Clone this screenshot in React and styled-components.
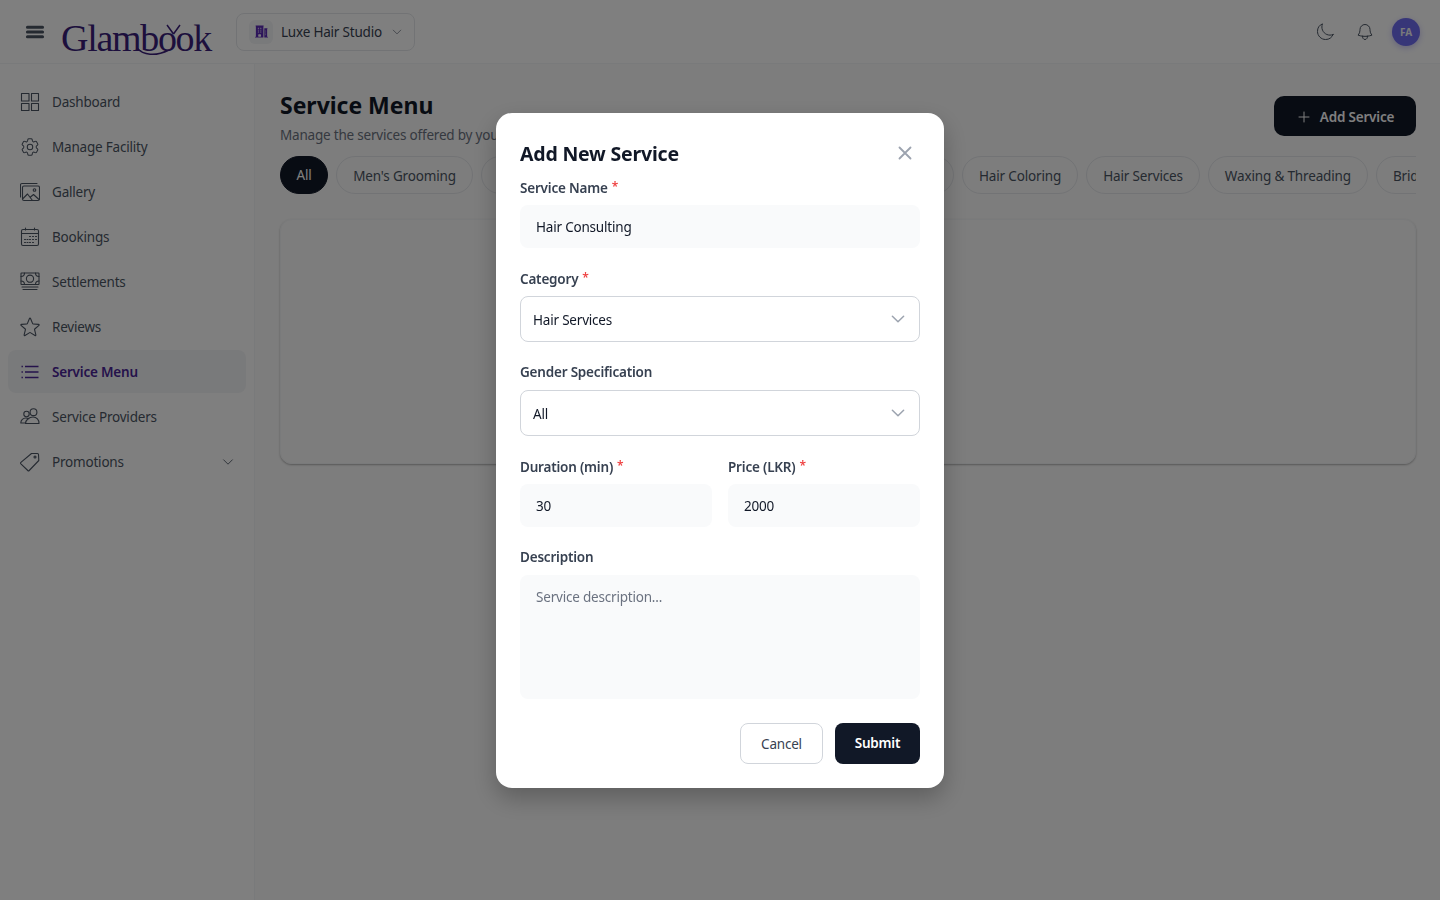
import styled, { createGlobalStyle } from "styled-components";
import {
  HiOutlineCog6Tooth,
  HiOutlineStar,
  HiOutlineChevronDown,
  HiOutlineMoon,
  HiOutlineBell,
  HiOutlinePlus,
  HiOutlineXMark,
  HiBars3,
  HiBuildingOffice2,
} from "react-icons/hi2";

const GlobalStyle = createGlobalStyle`
  * { box-sizing: border-box; }
  html, body { margin: 0; height: 100%; }
  body {
    font-family: "Noto Sans", "Open Sans", sans-serif;
    font-size: 13.5px;
    letter-spacing: -0.2px;
    background: #fff;
    color: #111827;
    overflow: hidden;
  }
  input, textarea, button {
    font-family: inherit;
    font-size: inherit;
    letter-spacing: inherit;
  }
`;

const Page = styled.div`
  height: 900px;
  display: flex;
  flex-direction: column;
`;

const Header = styled.header`
  height: 64px;
  flex: none;
  display: flex;
  align-items: center;
  padding: 0 20px 0 24px;
  border-bottom: 1px solid #f3f4f6;
`;

const MenuButton = styled.span`
  display: flex;
  font-size: 22px;
  color: #4b5563;
  margin-right: 15px;
  svg { stroke-width: 1.8; }
`;

const Logo = styled.div`
  position: relative;
  width: 150px;
  flex: none;
  margin: 13px 25px 0 0;
  font-family: "Liberation Serif", serif;
  font-size: 38px;
  letter-spacing: -1.3px;
  line-height: 38px;
  color: #3b1f7a;
`;

const LogoMark = styled.svg`
  position: absolute;
  left: 70px;
  top: 3px;
`;

const FacilityPicker = styled.div`
  height: 38px;
  width: 179px;
  flex: none;
  display: flex;
  align-items: center;
  padding: 0 12px;
  gap: 8px;
  border: 1px solid #e5e7eb;
  border-radius: 8px;
  color: #374151;
  white-space: nowrap;
`;

const FacilityIcon = styled.span`
  width: 24px;
  height: 24px;
  flex: none;
  display: flex;
  align-items: center;
  justify-content: center;
  border-radius: 6px;
  background: #f3f4f6;
  color: #5b2bb5;
  font-size: 15px;
`;

const Caret = styled.span`
  display: flex;
  font-size: 12px;
  color: #6b7280;
  margin-left: 1px;
`;

const HeaderRight = styled.div`
  margin-left: auto;
  display: flex;
  align-items: center;
  gap: 20px;
`;

const RoundIcon = styled.span`
  display: flex;
  width: 20px;
  font-size: 20px;
  color: #4b5563;
  svg { stroke-width: 1.2; }
`;

const Avatar = styled.span`
  width: 28px;
  height: 28px;
  margin-left: -3px;
  border-radius: 50%;
  display: flex;
  align-items: center;
  justify-content: center;
  background: #6f6cf0;
  color: #f3f4f6;
  font-size: 10px;
  font-weight: 700;
  letter-spacing: 0;
  box-shadow: 0 2px 6px rgba(79, 70, 229, 0.3);
`;

const Body = styled.div`
  flex: 1;
  display: flex;
  min-height: 0;
`;

const Sidebar = styled.nav`
  width: 255px;
  flex: none;
  padding: 16px 8px 0;
  border-right: 1px solid #f3f4f6;
  display: flex;
  flex-direction: column;
  gap: 2px;
`;

const NavItem = styled.div`
  height: 43px;
  display: flex;
  align-items: center;
  gap: 12px;
  padding: 0 12px;
  border-radius: 8px;
  font-weight: ${({ $active }) => ($active ? 600 : 400)};
  color: ${({ $active }) => ($active ? "#4a2596" : "#4b5563")};
  background: ${({ $active }) => ($active ? "#f3f4f6" : "transparent")};
`;

const NavIcon = styled.span`
  width: 20px;
  display: flex;
  justify-content: center;
  font-size: 22px;
  svg { flex: none; stroke-width: ${({ $active }) => ($active ? 1.7 : 1.1)}; }
`;

const NavCaret = styled.span`
  display: flex;
  margin: 0 -1px 0 auto;
  font-size: 14px;
`;

const Main = styled.main`
  flex: 1;
  min-width: 0;
  padding: 26px 24px 0 25px;
  background: #fafafa;
`;

const TitleRow = styled.div`
  display: flex;
  justify-content: space-between;
  align-items: flex-start;
`;

const PageTitle = styled.h1`
  margin: 0;
  font-size: 23px;
  line-height: 31px;
  font-weight: 700;
  letter-spacing: -0.02px;
  color: #111827;
`;

const PageSub = styled.p`
  margin: 4px 0 0;
  line-height: 20px;
  color: #6b7280;
`;

const AddButton = styled.button`
  margin-top: 6px;
  height: 40px;
  width: 142px;
  padding: 2px 0 0;
  display: flex;
  align-items: center;
  justify-content: center;
  gap: 8px;
  border: 0;
  border-radius: 10px;
  background: #111827;
  color: #fff;
  font-weight: 600;
`;

const Tabs = styled.div`
  margin-top: 11px;
  display: flex;
  gap: 8px;
  overflow: hidden;
`;

const Tab = styled.span`
  height: 38px;
  flex: none;
  display: flex;
  align-items: center;
  padding: ${({ $active }) => ($active ? "0 15.5px" : "2px 16px 0")};
  border-radius: 19px;
  border: 1px solid ${({ $active }) => ($active ? "#111827" : "#e5e7eb")};
  background: ${({ $active }) => ($active ? "#111827" : "transparent")};
  color: ${({ $active }) => ($active ? "#fff" : "#4b5563")};
  letter-spacing: -0.15px;
`;

const EmptyCard = styled.section`
  margin-top: 25px;
  height: 245px;
  border: 1px solid #f3f4f6;
  border-radius: 12px;
  box-shadow: 0 1px 2px rgba(0, 0, 0, 0.3);
`;

const Backdrop = styled.div`
  position: fixed;
  inset: 0;
  display: flex;
  align-items: center;
  justify-content: center;
  background: rgba(0, 0, 0, 0.5);
`;

const Modal = styled.form`
  width: 448px;
  height: 675px;
  padding: 24px;
  background: #fff;
  border-radius: 16px;
  box-shadow: 0 10px 25px rgba(0, 0, 0, 0.25);
`;

const ModalHead = styled.div`
  display: flex;
  justify-content: space-between;
  align-items: flex-start;
  height: 41px;
`;

const ModalTitle = styled.h2`
  margin: 3px 0 0;
  font-size: 19.5px;
  line-height: 28px;
  font-weight: 700;
  color: #111827;
`;

const CloseButton = styled.span`
  display: flex;
  margin: 5px 4px 0 0;
  font-size: 22px;
  color: #9ca3af;
  svg { stroke-width: 2; }
`;

const Field = styled.div`
  margin-top: ${({ $gap }) => $gap || 0}px;
  min-width: 0;
`;

const Label = styled.label`
  display: block;
  height: 20px;
  line-height: 18px;
  margin-bottom: 7px;
  font-weight: 600;
  color: #374151;
`;

const Required = styled.span`
  color: #ef4444;
  margin-left: 4px;
  vertical-align: 2px;
  font-size: 12px;
`;

const TextInput = styled.input`
  display: block;
  width: 100%;
  height: 43px;
  padding: 2px 16px 0;
  border: 0;
  border-radius: 8px;
  background: #f9fafb;
  color: #111827;
  outline: none;
`;

const TextArea = styled.textarea`
  display: block;
  width: 100%;
  height: 124px;
  padding: 13px 16px;
  border: 0;
  border-radius: 8px;
  background: #f9fafb;
  resize: none;
  outline: none;
  &::placeholder { color: #6b7280; opacity: 1; }
`;

const Select = styled.div`
  height: 46px;
  display: flex;
  align-items: center;
  justify-content: space-between;
  padding: 2px 12px 0 12px;
  border: 1px solid #d1d5db;
  border-radius: 8px;
  color: #111827;
`;

const SelectCaret = styled.span`
  display: flex;
  margin-top: -2px;
  font-size: 18px;
  color: #9ca3af;
  svg { stroke-width: 2; }
`;

const TwoColumns = styled.div`
  margin-top: 21px;
  display: grid;
  grid-template-columns: 1fr 1fr;
  gap: 16px;
`;

const Actions = styled.div`
  margin-top: 24px;
  display: flex;
  justify-content: flex-end;
  gap: 12px;
`;

const CancelButton = styled.button`
  width: 83px;
  height: 41px;
  padding: 2px 0 0;
  border: 1px solid #d1d5db;
  border-radius: 8px;
  background: #fff;
  color: #374151;
`;

const SubmitButton = styled.button`
  width: 85px;
  height: 41px;
  border: 0;
  border-radius: 8px;
  background: #111827;
  color: #fff;
  font-weight: 600;
`;

const LineIcon = ({ children }) => (
  <svg width="20" height="20" viewBox="0 0 20 20" fill="none" stroke="currentColor" strokeLinejoin="round" strokeLinecap="round">
    {children}
  </svg>
);

const DashboardIcon = () => (
  <LineIcon>
    <rect x="1.5" y="1.5" width="7.5" height="7.5" />
    <rect x="11.5" y="1.5" width="7" height="7.5" />
    <rect x="1.5" y="11.5" width="7.5" height="7" />
    <rect x="11.5" y="11.5" width="7" height="7" />
  </LineIcon>
);

const GalleryIcon = () => (
  <LineIcon>
    <path d="M0.5 15V3A1.5 1.5 0 0 1 2 1.5H17" />
    <rect x="2.5" y="4" width="17" height="14.5" rx="1.5" />
    <path d="M3 16.5l4.5-4.5 5 6.5M10.5 15l3-2.5 5.5 5" />
    <circle cx="14.5" cy="8" r="1.3" />
  </LineIcon>
);

const BookingsIcon = () => (
  <LineIcon>
    <rect x="1.5" y="2.5" width="17" height="16" rx="1.5" />
    <path d="M1.5 6.5h17M5.5 1v2M14.5 1v2" />
    <path d="M9.5 9.5h1M12.5 9.5h1M15.5 9.5h1M4.5 12.5h1M7 12.5h1M9.5 12.5h1M12.5 12.5h1M15.5 12.5h1M4.5 15.5h1M7 15.5h1M9.5 15.5h1M12.5 15.5h1" />
  </LineIcon>
);

const SettlementsIcon = () => (
  <LineIcon>
    <rect x="1" y="1" width="18" height="11.5" rx="0.5" />
    <circle cx="10" cy="6.7" r="3.6" />
    <path d="M1 4.5C3 4.5 4.5 3 4.5 1M19 4.5C17 4.5 15.5 3 15.5 1M1 9C3 9 4.5 10.5 4.5 12.5M19 9C17 9 15.5 10.5 15.5 12.5" />
    <path d="M2 15h16M3 17.5h14" />
  </LineIcon>
);

const ListIcon = () => (
  <svg width="20" height="20" viewBox="0 0 20 20" fill="none" stroke="currentColor">
    <path d="M5 4.5h13.5M5 10h13.5M5 15.5h13.5M1.5 4.5h1.4M1.5 10h1.4M1.5 15.5h1.4" />
  </svg>
);

const ProvidersIcon = () => (
  <LineIcon>
    <circle cx="6.5" cy="7" r="2.7" />
    <circle cx="13.5" cy="5.2" r="3.4" />
    <path d="M0.8 16c0-3 2.4-5 5-5 1.3 0 2.3.3 3 .8M5.5 16.5H19c.3-3.5-2.5-6.5-6-6.5-3.6 0-7.2 2.5-7.5 6.5zM0.8 16h4.7" />
  </LineIcon>
);

const TagIcon = () => (
  <LineIcon>
    <path d="M11.5 1.5h6a1 1 0 0 1 1 1l.3 6-9.6 10a1 1 0 0 1-1.4 0L0.9 11.8a1 1 0 0 1 0-1.4z" />
    <circle cx="15" cy="5" r="1" />
  </LineIcon>
);

const navItems = [
  { label: "Dashboard", icon: <DashboardIcon /> },
  { label: "Manage Facility", icon: <HiOutlineCog6Tooth /> },
  { label: "Gallery", icon: <GalleryIcon /> },
  { label: "Bookings", icon: <BookingsIcon /> },
  { label: "Settlements", icon: <SettlementsIcon /> },
  { label: "Reviews", icon: <HiOutlineStar size={24} /> },
  { label: "Service Menu", icon: <ListIcon />, active: true },
  { label: "Service Providers", icon: <ProvidersIcon /> },
  { label: "Promotions", icon: <TagIcon />, caret: true },
];

const categories = [
  "Men's Grooming",
  "Nail Art & Pedicure",
  "Massage & Body Spa",
  "Skin Care & Facial",
  "Hair Coloring",
  "Hair Services",
  "Waxing & Threading",
  "Bridal Packages",
];

export default function App() {
  return (
    <>
      <GlobalStyle />
      <Page>
        <Header>
          <MenuButton><HiBars3 /></MenuButton>
          <Logo>
            Glambook
            <LogoMark width="80" height="38" viewBox="0 0 80 38" fill="none" stroke="#3b1f7a" strokeWidth="1.5">
              <path d="M36 3l6.5 9M49 3l-6.5 9" />
              <path d="M6 26c6 7 18 9 32 2" />
            </LogoMark>
          </Logo>
          <FacilityPicker>
            <FacilityIcon><HiBuildingOffice2 /></FacilityIcon>
            Luxe Hair Studio
            <Caret><HiOutlineChevronDown /></Caret>
          </FacilityPicker>
          <HeaderRight>
            <RoundIcon><HiOutlineMoon /></RoundIcon>
            <RoundIcon><HiOutlineBell /></RoundIcon>
            <Avatar>FA</Avatar>
          </HeaderRight>
        </Header>
        <Body>
          <Sidebar>
            {navItems.map((item) => (
              <NavItem key={item.label} $active={item.active}>
                <NavIcon $active={item.active}>{item.icon}</NavIcon>
                {item.label}
                {item.caret && <NavCaret><HiOutlineChevronDown /></NavCaret>}
              </NavItem>
            ))}
          </Sidebar>
          <Main>
            <TitleRow>
              <div>
                <PageTitle>Service Menu</PageTitle>
                <PageSub>Manage the services offered by your facility</PageSub>
              </div>
              <AddButton type="button"><HiOutlinePlus size={16} /> Add Service</AddButton>
            </TitleRow>
            <Tabs>
              <Tab $active>All</Tab>
              {categories.map((name) => <Tab key={name}>{name}</Tab>)}
            </Tabs>
            <EmptyCard />
          </Main>
        </Body>
      </Page>
      <Backdrop>
        <Modal>
          <ModalHead>
            <ModalTitle>Add New Service</ModalTitle>
            <CloseButton><HiOutlineXMark /></CloseButton>
          </ModalHead>
          <Field>
            <Label>Service Name<Required>*</Required></Label>
            <TextInput readOnly value="Hair Consulting" />
          </Field>
          <Field $gap={21}>
            <Label>Category<Required>*</Required></Label>
            <Select>Hair Services<SelectCaret><HiOutlineChevronDown /></SelectCaret></Select>
          </Field>
          <Field $gap={21}>
            <Label>Gender Specification</Label>
            <Select>All<SelectCaret><HiOutlineChevronDown /></SelectCaret></Select>
          </Field>
          <TwoColumns>
            <Field>
              <Label>Duration (min)<Required>*</Required></Label>
              <TextInput readOnly value="30" />
            </Field>
            <Field>
              <Label>Price (LKR)<Required>*</Required></Label>
              <TextInput readOnly value="2000" />
            </Field>
          </TwoColumns>
          <Field $gap={21}>
            <Label>Description</Label>
            <TextArea placeholder="Service description..." />
          </Field>
          <Actions>
            <CancelButton type="button">Cancel</CancelButton>
            <SubmitButton type="button">Submit</SubmitButton>
          </Actions>
        </Modal>
      </Backdrop>
    </>
  );
}
